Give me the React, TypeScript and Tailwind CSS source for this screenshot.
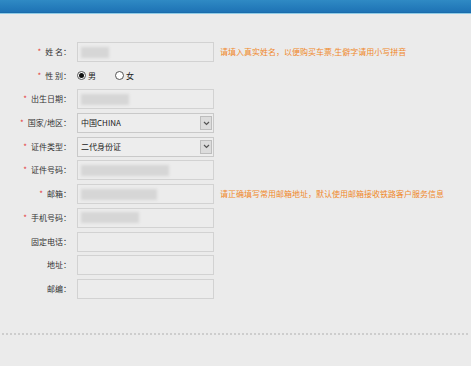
import { ReactNode } from "react";

type Row = {
  label: string
  required?: boolean
  kind: "text" | "select" | "radio"
  blur?: number
  value?: string
  hint?: string
}

const rows: Row[] = [
  { label: "姓 名：", required: true, kind: "text", blur: 28, hint: "请填入真实姓名，以便购买车票,生僻字请用小写拼音" },
  { label: "性 别：", required: true, kind: "radio" },
  { label: "出生日期：", required: true, kind: "text", blur: 48 },
  { label: "国家/地区：", required: true, kind: "select", value: "中国CHINA" },
  { label: "证件类型：", required: true, kind: "select", value: "二代身份证" },
  { label: "证件号码：", required: true, kind: "text", blur: 88 },
  { label: "邮箱：", required: true, kind: "text", blur: 76, hint: "请正确填写常用邮箱地址，默认使用邮箱接收铁路客户服务信息" },
  { label: "手机号码：", required: true, kind: "text", blur: 58 },
  { label: "固定电话：", kind: "text" },
  { label: "地址：", kind: "text" },
  { label: "邮编：", kind: "text" },
]

function Radio({ checked, children }: { checked?: boolean, children: ReactNode }) {
  return (
    <span className="flex items-center gap-[2px]">
      <span className="w-[9px] h-[9px] rounded-full border border-[#555] bg-white flex items-center justify-center">
        {checked && <span className="w-[5px] h-[5px] rounded-full bg-[#111]" />}
      </span>
      <span>{children}</span>
    </span>
  )
}

function Field({ row }: { row: Row }) {
  if (row.kind === "radio") {
    return (
      <div className="flex items-center h-full gap-[19px] text-[#222]">
        <Radio checked>男</Radio>
        <Radio>女</Radio>
      </div>
    )
  }
  if (row.kind === "select") {
    return (
      <div className="w-[137px] h-full border border-[#c9c9c9] bg-[#ededed] flex items-center justify-between pl-[3px] pr-[1px] text-[#222]">
        <span>{row.value}</span>
        <span className="w-[12px] h-[14px] border border-[#bdbdbd] bg-[#dcdcdc] flex items-center justify-center">
          <svg width="7" height="5" viewBox="0 0 7 5">
            <path d="M1 1 L3.5 3.5 L6 1" fill="none" stroke="#555" strokeWidth="1.2" />
          </svg>
        </span>
      </div>
    )
  }
  return (
    <div className="w-[137px] h-full border border-[#d2d2d2] bg-[#ececec] flex items-center pl-[3px]">
      {row.blur ? <span className="h-[11px] bg-[#d6d6d6] blur-[1.5px]" style={{ width: row.blur }} /> : null}
    </div>
  )
}

export default function App() {
  return (
    <div className="w-[471px] h-[366px] bg-[#ebebeb] overflow-hidden" style={{ fontFamily: '"Noto Sans CJK SC", "Liberation Sans", sans-serif' }}>
      <div className="h-[12px] bg-gradient-to-b from-[#2f8ac4] to-[#1e73b5]" />
      <div className="h-[1px] bg-[#1a6cab]" />
      <div className="h-[1px] bg-[#8fcbe6]" />

      <div className="mt-[28px] flex flex-col gap-[3.7px] text-[8px]">
        {rows.map(row => (
          <div key={row.label} className="flex items-center h-[20px]">
            <div className="w-[71px] text-right text-[#333] whitespace-nowrap">
              {row.required && <span className="text-[#e53b3b] mr-[4px]">*</span>}
              {row.label}
            </div>
            <div className="ml-[6px] h-full">
              <Field row={row} />
            </div>
            {row.hint && <span className="ml-[6px] text-[#f0882a] whitespace-nowrap">{row.hint}</span>}
          </div>
        ))}
      </div>

      <div className="mt-[34px] mx-[2px] h-[2px] bg-[repeating-linear-gradient(90deg,#cdcdcd_0_2px,transparent_2px_4px)]" />
    </div>
  )
}
